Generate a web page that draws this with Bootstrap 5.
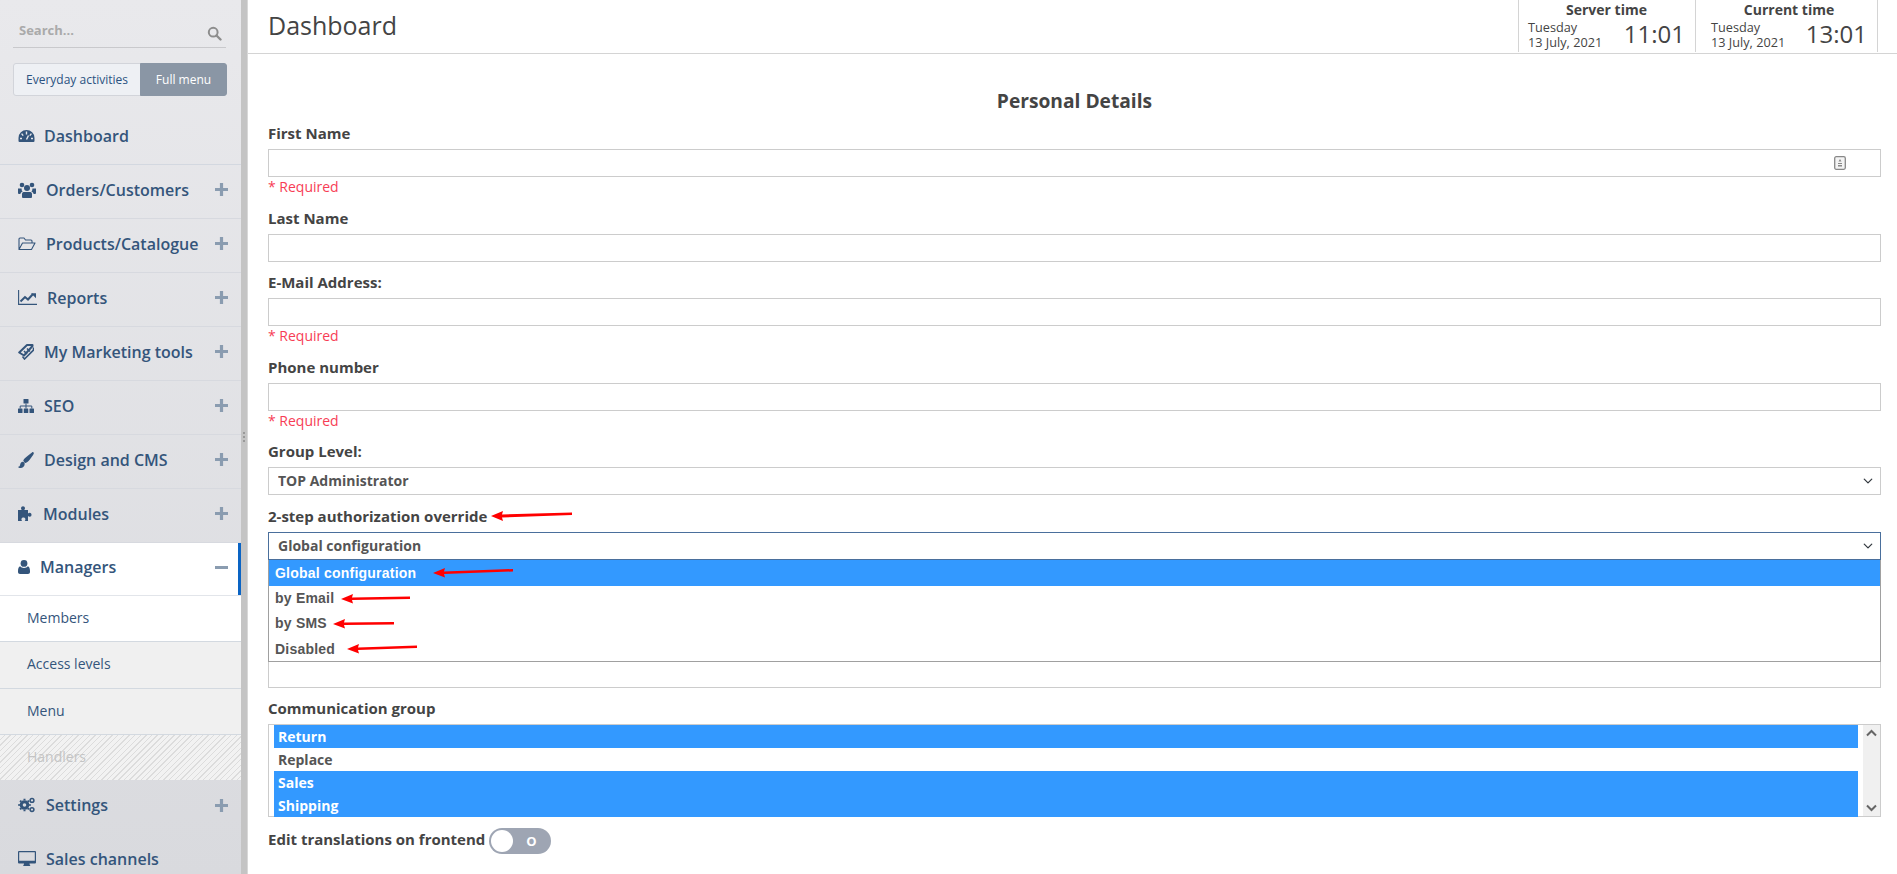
<!DOCTYPE html>
<html lang="en">
<head>
<meta charset="utf-8">
<title>Dashboard</title>
<link href="https://cdn.jsdelivr.net/npm/bootstrap@5.3.0/dist/css/bootstrap.min.css" rel="stylesheet">
<style>
html,body{height:874px;overflow:hidden}
body{font-family:"Open Sans",sans-serif;color:#444;background:#fff;position:relative}
.side{width:241px;height:874px;flex:none;overflow:hidden;background:linear-gradient(#e9e9ec,#d9dade)}
.gutter{width:7px;flex:none;background:#c4c4c4;border-right:1px solid #d8d8d8;gap:2px}
.gutter i{width:2px;height:2px;background:#999;display:block}
.searchbar{margin:15px 15px 0 13px;height:33px;border-bottom:1px solid #c9c9cc;padding:5px 6px 0;font-size:13px;font-weight:700;color:#aaa;line-height:20px}
.searchbar svg{margin-top:6px;margin-right:-2px}
.modes{margin:15px 14px 0 13px;height:33px}
.modes .btn{font-size:12px;line-height:16px;padding:0;border-radius:3px;height:33px}
.modes .mode-off{flex:none;width:128px;background:#eef0f4;border:1px solid #d2d4da;color:#2b5281}
.modes .mode-off:hover{background:#eef0f4;color:#2b5281}
.modes .mode-on{flex:1;background:#8a96a5;border:1px solid #8a96a5;color:#fff}
.modes .mode-on:hover{background:#8a96a5;color:#fff}
.menu{margin-top:14px}
.mitem{height:54px;border-bottom:1px solid #d7d9df;padding:0 13px 3.5px 18px;color:#34557b;font-size:16px;font-weight:600;text-decoration:none;position:relative}
.mitem:hover{color:#34557b}
.mitem .ico{flex:none;margin-right:10px}
.mitem .sign{margin-left:auto;flex:none}
.mitem.first{height:55px;padding-bottom:2px;border-bottom-color:#d3d8e0}
.mitem.first .ico{margin-right:9px}
.mitem.active{background:#fff;border-bottom:1px solid #e2e5ea;height:53px;padding-bottom:4px}
.mitem.active::after{content:"";position:absolute;right:0;top:0;bottom:0;width:3px;background:#0a64c4}
.mitem.last{border-bottom:0;padding-bottom:3px}
.sub{height:46.33px;padding:0 0 2px 27px;font-size:14px;color:#34557b;background:#f0f0f0;border-bottom:1px solid #d3d9e0;text-decoration:none}
.sub:hover{color:#34557b}
.sub.cur{background:#fff}
.sub.off{color:#c4c4c4;border-bottom:0;height:45px;background:repeating-linear-gradient(135deg,#f2f2f2 0,#f2f2f2 3px,#dcdcdc 3px,#dcdcdc 4px)}
.main{flex:1;min-width:0;height:874px;overflow:hidden}
.top{height:54px;border-bottom:1px solid #d4d4d4;padding:0 19px 0 20px}
.top h1{font-size:25px;font-weight:400;line-height:32px;margin:0;color:#444;padding-bottom:3px}
.clock{height:52px;border-left:1px solid #d4d4d4;padding:0 10px 0 9px;width:177px}
.clock+.clock{border-right:1px solid #d4d4d4;width:183px;padding:0 10px 0 15px}
.clock-t{font-size:14px;font-weight:700;line-height:19px;text-align:center;color:#444}
.clock-d{font-size:12.7px;line-height:15px;color:#444;margin-top:1px}
.clock-h{font-size:24px;line-height:28px;color:#444;margin-top:1px}
.form-area{padding:0 16px 0 20px}
.sect{font-size:19.2px;font-weight:700;text-align:center;line-height:24px;margin:35px 0 11px;color:#444}
.fld{margin:0;font-size:15px;font-weight:700;line-height:18px;color:#444;display:block;padding-bottom:7px}
.box.form-control,.box.form-select{height:28px;min-height:28px;border-radius:0;border:1px solid #ccc;padding:0 9px;font-size:14px;font-weight:700;line-height:26px;color:#555;letter-spacing:0;box-shadow:none}
.box.form-select{background-position:right 6px center;background-size:12px 10px;padding-right:24px}
.box.open{border-color:#4a6f9c}
.req{font-size:14px;line-height:19px;color:#f73d55;height:21px}
.gap-req{margin-bottom:10.5px}
.gap-plain{margin-bottom:11.5px}
.field-key{right:35px}
.wrap-open{position:relative}
.drop{position:absolute;left:0;right:0;top:100%;z-index:5;background:#fff;border:1px solid #a0a0a0;border-top:0;font-family:"Liberation Sans",sans-serif;font-size:14px;font-weight:700;color:#555;letter-spacing:.22px;height:102px}
.drop div{height:25.5px;line-height:25.5px;padding-left:6px}
.drop .sel{background:#39f;color:#fff;height:26px;line-height:27px}
.hiddenbox{margin-top:100.5px;margin-bottom:11px}
.multi{height:93px;border:1px solid #ccc;margin-bottom:11px}
.multi-list{flex:1;padding-left:5px;min-width:0}
.opt{height:23px;line-height:23px;font-size:14px;font-weight:700;color:#555;padding-left:4px}
.opt.on{background:#39f;color:#fff;margin-right:5px}
.sbar{width:17px;flex:none;background:#f0f0f0}
.tgl-row{font-size:15px;font-weight:700;color:#444}
.tgl-text{margin-bottom:3px}
.tgl{width:62px;height:26px;border-radius:13px;background:#9ea5b3;padding:2px;margin-left:4px;color:#fff;font-size:13px;font-weight:700}
.tgl i{width:22px;height:22px;border-radius:50%;background:#fff;display:block}
.tgl span{flex:1;text-align:center;line-height:20px}
.marks{position:absolute;left:0;top:0;width:1897px;height:874px;z-index:10;pointer-events:none}
</style>
</head>
<body class="d-flex">
<aside class="side">
  <div class="searchbar d-flex justify-content-between"><span>Search...</span>
    <svg width="15" height="15" viewBox="0 0 15 15"><circle cx="6.2" cy="6.2" r="4.4" fill="none" stroke="#8d8d8d" stroke-width="2"/><path d="M9.5 9.5L13.5 13.5" stroke="#8d8d8d" stroke-width="2.4" stroke-linecap="round"/></svg>
  </div>
  <div class="btn-group modes d-flex" role="group">
    <button type="button" class="btn mode-off">Everyday activities</button>
    <button type="button" class="btn mode-on">Full menu</button>
  </div>
  <nav class="menu">
    <a class="mitem first d-flex align-items-center" href="#"><svg class="ico" width="17" height="14" viewBox="0 0 17 14"><path fill="#34557b" d="M8.5 1A8 8 0 0 0 .5 9v3a1 1 0 0 0 1 1h14a1 1 0 0 0 1-1V9a8 8 0 0 0-8-8z"/><path stroke="#e8e8eb" stroke-width="1.4" d="M8.5 2.5v3M3.6 4.6l1.6 2M13.4 4.6l-1.6 2M2 9.5h2M13 9.5h2M8.5 10.5l2-4"/></svg>Dashboard</a>
    <a class="mitem d-flex align-items-center" href="#"><svg class="ico" width="18" height="16" viewBox="0 0 18 16"><g fill="#34557b"><circle cx="4" cy="3" r="2.3"/><circle cx="14" cy="3" r="2.3"/><circle cx="9" cy="6" r="3"/><path d="M0 6.5h3.6a4 4 0 0 0 1 3.2C3 10 2.6 11 2.4 12H1a1 1 0 0 1-1-1zM18 6.5h-3.6a4 4 0 0 1-1 3.2c1.6.3 2 1.3 2.2 2.3H17a1 1 0 0 0 1-1z"/><path d="M5.6 10h6.8c1 0 1.6 1 1.6 2.2V15a1 1 0 0 1-1 1H5a1 1 0 0 1-1-1v-2.8C4 11 4.600 10 5.600 10z"/></g></svg>Orders/Customers<svg class="sign" width="13" height="13" viewBox="0 0 13 13"><path d="M6.500 0v13M0 6.500h13" stroke="#8a9cb0" stroke-width="3.200"/></svg></a>
    <a class="mitem d-flex align-items-center" href="#"><svg class="ico" width="18" height="14" viewBox="0 0 18 14"><path fill="none" stroke="#34557b" stroke-width="1.100" stroke-linejoin="round" d="M1 12.500V2a1 1 0 0 1 1-1h4l1.500 2H13a1 1 0 0 1 1 1v1.800M1 12.500h12.500L17 6H4.500z"/></svg>Products/Catalogue<svg class="sign" width="13" height="13" viewBox="0 0 13 13"><path d="M6.500 0v13M0 6.500h13" stroke="#8a9cb0" stroke-width="3.200"/></svg></a>
    <a class="mitem d-flex align-items-center" href="#"><svg class="ico" width="19" height="15" viewBox="0 0 19 15"><path fill="none" stroke="#34557b" stroke-width="1.100" d="M.6 0v14.400H19"/><path fill="none" stroke="#34557b" stroke-width="2" d="M2.500 11.500l4.500-4.500 3 2.500 5-5.500"/><path fill="#34557b" d="M13 3.200h5v5z"/></svg>Reports<svg class="sign" width="13" height="13" viewBox="0 0 13 13"><path d="M6.500 0v13M0 6.500h13" stroke="#8a9cb0" stroke-width="3.200"/></svg></a>
    <a class="mitem d-flex align-items-center" href="#"><svg class="ico" width="16" height="16" viewBox="0 0 16 16"><path fill="none" stroke="#34557b" stroke-width="2" stroke-linejoin="round" d="M1.200 8.500L9 1h5.500v1L6 11.500z"/><path fill="none" stroke="#34557b" stroke-width="1.600" d="M4.500 12.500l2 2.500L15.500 6V3.500M6 7l3 3M9 4.500l3 3"/></svg>My Marketing tools<svg class="sign" width="13" height="13" viewBox="0 0 13 13"><path d="M6.500 0v13M0 6.500h13" stroke="#8a9cb0" stroke-width="3.200"/></svg></a>
    <a class="mitem d-flex align-items-center" href="#"><svg class="ico" width="16" height="14" viewBox="0 0 16 14"><g fill="#34557b"><rect x="5.500" y="0" width="5" height="4.500" rx=".6"/><rect x="0" y="9.500" width="4.500" height="4.500" rx=".5"/><rect x="5.750" y="9.500" width="4.500" height="4.500" rx=".5"/><rect x="11.500" y="9.500" width="4.500" height="4.500" rx=".5"/></g><path fill="none" stroke="#34557b" d="M8 4.500v5M2.200 9.500V7h11.600v2.500"/></svg>SEO<svg class="sign" width="13" height="13" viewBox="0 0 13 13"><path d="M6.500 0v13M0 6.500h13" stroke="#8a9cb0" stroke-width="3.200"/></svg></a>
    <a class="mitem d-flex align-items-center" href="#"><svg class="ico" width="16" height="16" viewBox="0 0 16 16"><path fill="#34557b" d="M15.300.2c.6.400.7 1 .3 1.700C14 4.800 10.900 9 9 10.300c-.8.500-1.500.7-2 .6L5.300 9c0-.6.300-1.200.8-2C7.800 5 11.700 2 14 .4c.5-.4 1-.5 1.300-.2zM4.600 9.700c1 0 2 .8 2.100 1.900C6.800 14 5 16 2.500 16 1.300 16 .2 15.500 0 14.700c.9 0 1.700-.4 2-1.500.4-2 1.300-3.500 2.600-3.500z"/></svg>Design and CMS<svg class="sign" width="13" height="13" viewBox="0 0 13 13"><path d="M6.500 0v13M0 6.500h13" stroke="#8a9cb0" stroke-width="3.200"/></svg></a>
    <a class="mitem d-flex align-items-center" href="#"><svg class="ico" width="15" height="15" viewBox="0 0 15 15"><path fill="#34557b" d="M0 4h3.800c-.4-.6-.8-1-.8-1.700C3 1 4 .3 5 .3s2 .7 2 2c0 .7-.4 1.100-.8 1.700H10v3.600c.6-.4 1-.8 1.700-.8 1.300 0 1.800 1 1.800 2s-.5 2-1.800 2c-.7 0-1.100-.4-1.700-.8V15H6.700c.4-.6.7-1 .7-1.700 0-1.200-1-1.800-2-1.800s-2 .6-2 1.800c0 .7.300 1.100.7 1.700H0z"/></svg>Modules<svg class="sign" width="13" height="13" viewBox="0 0 13 13"><path d="M6.500 0v13M0 6.500h13" stroke="#8a9cb0" stroke-width="3.200"/></svg></a>
    <a class="mitem active d-flex align-items-center" href="#"><svg class="ico" width="12" height="14" viewBox="0 0 12 14"><g fill="#34557b"><circle cx="6" cy="3.400" r="3.400"/><path d="M2.200 6.300C3 7.500 4.400 8 6 8s3-.5 3.800-1.700C11.200 6.800 12 8.500 12 11v1c0 1.200-.8 2-2 2H2c-1.200 0-2-.8-2-2v-1c0-2.500.8-4.200 2.200-4.700z"/></g></svg>Managers<svg class="sign" width="13" height="13" viewBox="0 0 13 13"><path d="M0 6.500h13" stroke="#8a9cb0" stroke-width="3"/></svg></a>
    <a class="sub cur d-flex align-items-center" href="#">Members</a>
    <a class="sub d-flex align-items-center" href="#">Access levels</a>
    <a class="sub d-flex align-items-center" href="#">Menu</a>
    <a class="sub off d-flex align-items-center" href="#">Handlers</a>
    <a class="mitem last d-flex align-items-center" href="#"><svg class="ico" width="18" height="16" viewBox="0 0 18 16"><g fill="none" stroke="#34557b"><circle cx="6.500" cy="8" r="3.300" stroke-width="3"/><path stroke-width="2" d="M6.500 1.800v1.500M6.500 12.700v1.500M.3 8h1.500M11.200 8h1.500M2.100 3.600l1.100 1.100M9.800 11.300l1.100 1.100M10.900 3.600L9.800 4.700M3.200 11.300l-1.100 1.100"/><circle cx="14" cy="3.400" r="1.900" stroke-width="1.500"/><circle cx="14" cy="12.600" r="1.900" stroke-width="1.500"/></g></svg>Settings<svg class="sign" width="13" height="13" viewBox="0 0 13 13"><path d="M6.500 0v13M0 6.500h13" stroke="#8a9cb0" stroke-width="3.200"/></svg></a>
    <a class="mitem last d-flex align-items-center" href="#"><svg class="ico" width="18" height="16" viewBox="0 0 18 16"><path fill="#34557b" d="M1 0h16a1 1 0 0 1 1 1v10.500a1 1 0 0 1-1 1h-5.500c0 1 .5 1.700 1 2.500H5c.5-.8 1-1.500 1-2.500H1a1 1 0 0 1-1-1V1a1 1 0 0 1 1-1zm.2 1.200v8.600h15.600V1.200z"/></svg>Sales channels</a>
  </nav>
</aside>
<div class="gutter d-flex flex-column justify-content-center align-items-center"><i></i><i></i><i></i></div>
<main class="main">
  <header class="top d-flex align-items-center justify-content-between">
    <h1>Dashboard</h1>
    <div class="d-flex align-self-start">
      <div class="clock">
        <div class="clock-t">Server time</div>
        <div class="d-flex justify-content-between"><div class="clock-d">Tuesday<br>13 July, 2021</div><div class="clock-h">11:01</div></div>
      </div>
      <div class="clock">
        <div class="clock-t">Current time</div>
        <div class="d-flex justify-content-between"><div class="clock-d">Tuesday<br>13 July, 2021</div><div class="clock-h">13:01</div></div>
      </div>
    </div>
  </header>
  <form class="form-area">
    <div class="sect">Personal Details</div>
    <label class="fld">First Name</label>
    <div class="position-relative">
      <input class="form-control box" type="text">
      <svg class="position-absolute top-50 translate-middle-y field-key" width="12" height="14" viewBox="0 0 12 14"><rect x=".7" y=".7" width="10.600" height="12.600" rx="1.500" fill="#f4f4f4" stroke="#888" stroke-width="1.300"/><path d="M6 3l1.500 2.500h-3zM4 7h4v1H4zM4 9h4v1.500H4z" fill="#888"/></svg>
    </div>
    <div class="req gap-req">* Required</div>
    <label class="fld">Last Name</label>
    <input class="form-control box gap-plain" type="text">
    <label class="fld">E-Mail Address:</label>
    <input class="form-control box" type="text">
    <div class="req gap-req">* Required</div>
    <label class="fld">Phone number</label>
    <input class="form-control box" type="text">
    <div class="req gap-req">* Required</div>
    <label class="fld">Group Level:</label>
    <select class="form-select box gap-plain"><option>TOP Administrator</option></select>
    <label class="fld">2-step authorization override</label>
    <div class="wrap-open">
      <select class="form-select box open"><option>Global configuration</option></select>
      <div class="drop">
        <div class="sel">Global configuration</div>
        <div>by Email</div>
        <div>by SMS</div>
        <div>Disabled</div>
      </div>
    </div>
    <input class="form-control box hiddenbox" type="text">
    <label class="fld">Communication group</label>
    <div class="multi d-flex">
      <div class="multi-list">
        <div class="opt on">Return</div>
        <div class="opt">Replace</div>
        <div class="opt on">Sales</div>
        <div class="opt on">Shipping</div>
      </div>
      <div class="sbar d-flex flex-column justify-content-between align-items-center py-1">
        <svg width="11" height="8" viewBox="0 0 11 8"><path d="M1 6.500l4.500-4.500 4.500 4.500" fill="none" stroke="#666" stroke-width="2"/></svg>
        <svg width="11" height="8" viewBox="0 0 11 8"><path d="M1 1.500l4.500 4.500 4.500-4.500" fill="none" stroke="#666" stroke-width="2"/></svg>
      </div>
    </div>
    <div class="tgl-row d-flex align-items-center"><span class="tgl-text">Edit translations on frontend</span>
      <div class="tgl d-flex align-items-center"><i></i><span>O</span></div>
    </div>
  </form>
</main>
<svg class="marks" viewBox="0 0 1897 874">
  <g fill="#f00">
    <path d="M491 516l12-5 -1 3.500 70-2v2.500l-70 2.500 1 3.500z"/>
    <path d="M433 573l12-5-1 3.500 69-2.500v2.500l-69 2.500 1 3.500z"/>
    <path d="M341 599l12-5-1 3.500 58-1v2.500l-58 1 1 3.500z"/>
    <path d="M333 624l12-5-1 3.500 50-.5v2.500l-50 .5 1 3.500z"/>
    <path d="M347 649l12-5-1 3.500 59-2v2.500l-59 2 1 3.500z"/>
  </g>
</svg>
<script src="https://cdn.jsdelivr.net/npm/bootstrap@5.3.0/dist/js/bootstrap.bundle.min.js"></script>
</body>
</html>
